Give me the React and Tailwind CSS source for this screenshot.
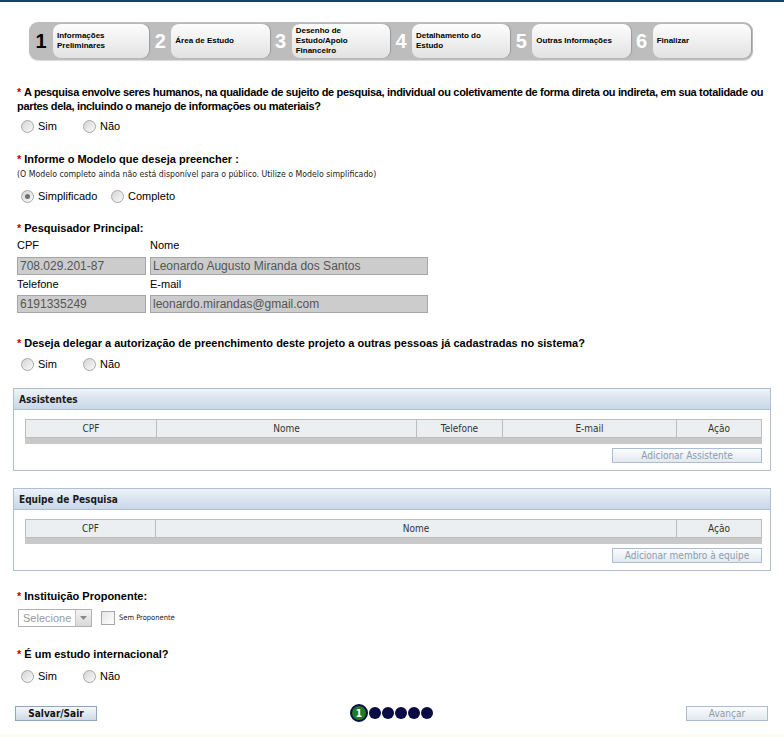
import React from "react";

const steps = [
  { n: "1", label: ["Informações", "Preliminares"], active: true },
  { n: "2", label: ["Área de Estudo"] },
  { n: "3", label: ["Desenho de", "Estudo/Apoio", "Financeiro"] },
  { n: "4", label: ["Detalhamento do", "Estudo"] },
  { n: "5", label: ["Outras Informações"] },
  { n: "6", label: ["Finalizar"] },
];

const narrow = { fontFamily: "'DejaVu Sans Condensed', 'Liberation Sans', sans-serif" };

const Stepper = () => (
  <div className="ml-[29px] mt-[20px] flex h-[38px] w-[724px] rounded-[9px] bg-[#bdbdbd] py-[2px] pr-[2px] shadow-[0_1px_1px_rgba(0,0,0,0.15)]">
    {steps.map((s, i) => (
      <div key={s.n} className="flex flex-1">
        <div
          className={`flex items-center justify-center text-[20px] font-bold ${
            i === 0 ? "w-[24px] text-black" : "w-[22px] text-white"
          }`}
        >
          {s.n}
        </div>
        <div className="flex flex-1 items-center rounded-[8px] bg-linear-to-b from-[#fdfdfd] to-[#e2e2e2] pl-[4px] shadow-[1px_0_1px_#9a9a9a]">
          <div className="text-[8px] font-bold leading-[10px] text-black">
            {s.label.map((l) => (
              <div key={l}>{l}</div>
            ))}
          </div>
        </div>
      </div>
    ))}
  </div>
);

const Radio = ({ checked }) => (
  <span className="relative inline-flex h-[13px] w-[13px] items-center justify-center rounded-full border border-[#a8a8a8] bg-linear-to-br from-[#d4d4d4] to-[#fafafa]">
    {checked && <span className="h-[5px] w-[5px] rounded-full bg-[#707070]" />}
  </span>
);

const RadioRow = ({ items, checked, gaps, className = "" }) => (
  <div className={`ml-[21px] flex h-[14px] items-center text-[11px] ${className}`}>
    {items.map((t, i) => (
      <label key={t} className="flex items-center" style={{ width: gaps[i] }}>
        <Radio checked={checked === i} />
        <span className="ml-[4px]">{t}</span>
      </label>
    ))}
  </div>
);

const Question = ({ children, className = "" }) => (
  <div className={`px-[17px] text-[11px] font-bold leading-[14px] text-black ${className}`}>
    <span className="mr-[3px] text-[#d00000]">*</span>
    {children}
  </div>
);

const Input = ({ value, w }) => (
  <div className={`flex h-[18px] items-center border border-[#a6a6a6] bg-[#cccccc] px-[2px] text-[12px] text-[#555] ${w}`}>
    {value}
  </div>
);

const Panel = ({ title, cols, button, className = "" }) => (
  <div className={`mx-[13px] border border-[#aebfd2] ${className}`} style={narrow}>
    <div className="flex h-[21px] items-center border-b border-[#aebfd2] bg-linear-to-b from-[#eef3f8] via-[#d9e4ef] to-[#c9d8e8] pl-[5px] text-[10px] font-bold text-[#1a1a1a]">
      {title}
    </div>
    <div className="pl-[11px] pr-[8px] pt-[9px] pb-[7px]">
      <div className="flex h-[19px] border border-[#bdbdbd] bg-[#eceff2] text-[10px] text-[#333]">
        {cols.map((c, i) => (
          <div
            key={c.t}
            className={`flex items-center justify-center ${i > 0 ? "border-l border-[#bdbdbd]" : ""}`}
            style={{ width: c.w, flex: c.w ? "none" : 1 }}
          >
            {c.t}
          </div>
        ))}
      </div>
      <div className="h-[6px] bg-[#c9c9c9]" />
      <div className="mt-[4px] flex justify-end">
        <div className="flex h-[15px] w-[150px] items-center justify-center border border-[#a9bdd4] bg-linear-to-b from-[#fbfcfd] to-[#e3e8ee] text-[10px] text-[#8b9cb2]">
          {button}
        </div>
      </div>
    </div>
  </div>
);

export default function App() {
  return (
    <div className="relative h-[737px] w-[784px] overflow-hidden bg-white" style={{ fontFamily: "'Liberation Sans', Arial, sans-serif" }}>
      <div className="h-[2px] bg-[#0d4766]" />
      <Stepper />

      <Question className="mt-[25px] tracking-[-0.33px]">
        A pesquisa envolve seres humanos, na qualidade de sujeito de pesquisa, individual ou coletivamente de forma direta ou indireta, em sua totalidade ou partes dela, incluindo o manejo de informações ou materiais?
      </Question>
      <RadioRow className="mt-[6px]" items={["Sim", "Não"]} gaps={[62, 60]} />

      <Question className="mt-[19px]">Informe o Modelo que deseja preencher :</Question>
      <div className="mt-[2px] px-[17px] text-[8.7px] leading-[12px] text-[#222]" style={narrow}>
        (O Modelo completo ainda não está disponível para o público. Utilize o Modelo simplificado)
      </div>
      <RadioRow className="mt-[9px]" items={["Simplificado", "Completo"]} checked={0} gaps={[90, 80]} />

      <Question className="mt-[18px]">Pesquisador Principal:</Question>
      <div className="mt-[4px] ml-[17px] grid grid-cols-[129px_278px] gap-x-[4px] text-[11px]">
        <div className="h-[12px] leading-[12px]">CPF</div>
        <div className="h-[12px] leading-[12px]">Nome</div>
        <div className="col-span-2 mt-[6px] flex gap-[4px]">
          <Input value="708.029.201-87" w="w-[129px]" />
          <Input value="Leonardo Augusto Miranda dos Santos" w="w-[278px]" />
        </div>
        <div className="mt-[3px] h-[12px] leading-[12px]">Telefone</div>
        <div className="mt-[3px] h-[12px] leading-[12px]">E-mail</div>
        <div className="col-span-2 mt-[5px] flex gap-[4px]">
          <Input value="6191335249" w="w-[129px]" />
          <Input value="leonardo.mirandas@gmail.com" w="w-[278px]" />
        </div>
      </div>

      <Question className="mt-[23px]">
        Deseja delegar a autorização de preenchimento deste projeto a outras pessoas já cadastradas no sistema?
      </Question>
      <RadioRow className="mt-[7px]" items={["Sim", "Não"]} gaps={[62, 60]} />

      <Panel
        className="mt-[17px]"
        title="Assistentes"
        cols={[
          { t: "CPF", w: 130 },
          { t: "Nome", w: 260 },
          { t: "Telefone", w: 86 },
          { t: "E-mail", w: 174 },
          { t: "Ação" },
        ]}
        button="Adicionar Assistente"
      />

      <Panel
        className="mt-[17px]"
        title="Equipe de Pesquisa"
        cols={[
          { t: "CPF", w: 129 },
          { t: "Nome", w: 521 },
          { t: "Ação" },
        ]}
        button="Adicionar membro à equipe"
      />

      <Question className="mt-[18px]">Instituição Proponente:</Question>
      <div className="mt-[6px] ml-[18px] flex items-center">
        <div className="flex h-[18px] w-[74px] items-center border border-[#b0b0b0] bg-white pl-[4px] text-[11px] text-[#9a9a9a]">
          <span className="flex-1">Selecione</span>
          <span className="flex h-[16px] w-[16px] items-center justify-center border-l border-[#c4c4c4] bg-linear-to-b from-[#f4f4f4] to-[#d8d8d8]">
            <svg width="7" height="4" viewBox="0 0 7 4">
              <path d="M0 0h7L3.5 4z" fill="#8a8a8a" />
            </svg>
          </span>
        </div>
        <span className="ml-[9px] h-[14px] w-[14px] border border-[#a9a9a9] bg-linear-to-br from-[#e6e6e6] to-white" />
        <span className="ml-[4px] text-[7.5px] text-[#222]" style={narrow}>
          Sem Proponente
        </span>
      </div>

      <Question className="mt-[20px]">É um estudo internacional?</Question>
      <RadioRow className="mt-[8px]" items={["Sim", "Não"]} gaps={[62, 60]} />

      <div className="mt-[21px] flex h-[18px] items-center justify-between pl-[15px] pr-[16px]" style={narrow}>
        <div className="flex h-[15px] w-[82px] items-center justify-center border border-[#8ea4bf] bg-linear-to-b from-[#f4f7fa] to-[#cfdae6] text-[10px] font-bold text-[#111]">
          Salvar/Sair
        </div>
        <div className="flex items-center">
          <span className="flex h-[18px] w-[18px] items-center justify-center rounded-full border-[2px] border-[#0a0f40] bg-[#1f7a2a] text-[10px] font-bold text-white">
            1
          </span>
          {[0, 1, 2, 3, 4].map((d) => (
            <span key={d} className="ml-[1px] h-[12px] w-[12px] rounded-full bg-[#0a0a45]" />
          ))}
        </div>
        <div className="flex h-[15px] w-[82px] items-center justify-center border border-[#a9bdd4] bg-linear-to-b from-[#fbfcfd] to-[#e3e8ee] text-[10px] text-[#8b9cb2]">
          Avançar
        </div>
      </div>
      <div className="absolute bottom-0 left-0 h-[3px] w-full bg-[#fcfcf2]" />
    </div>
  );
}
